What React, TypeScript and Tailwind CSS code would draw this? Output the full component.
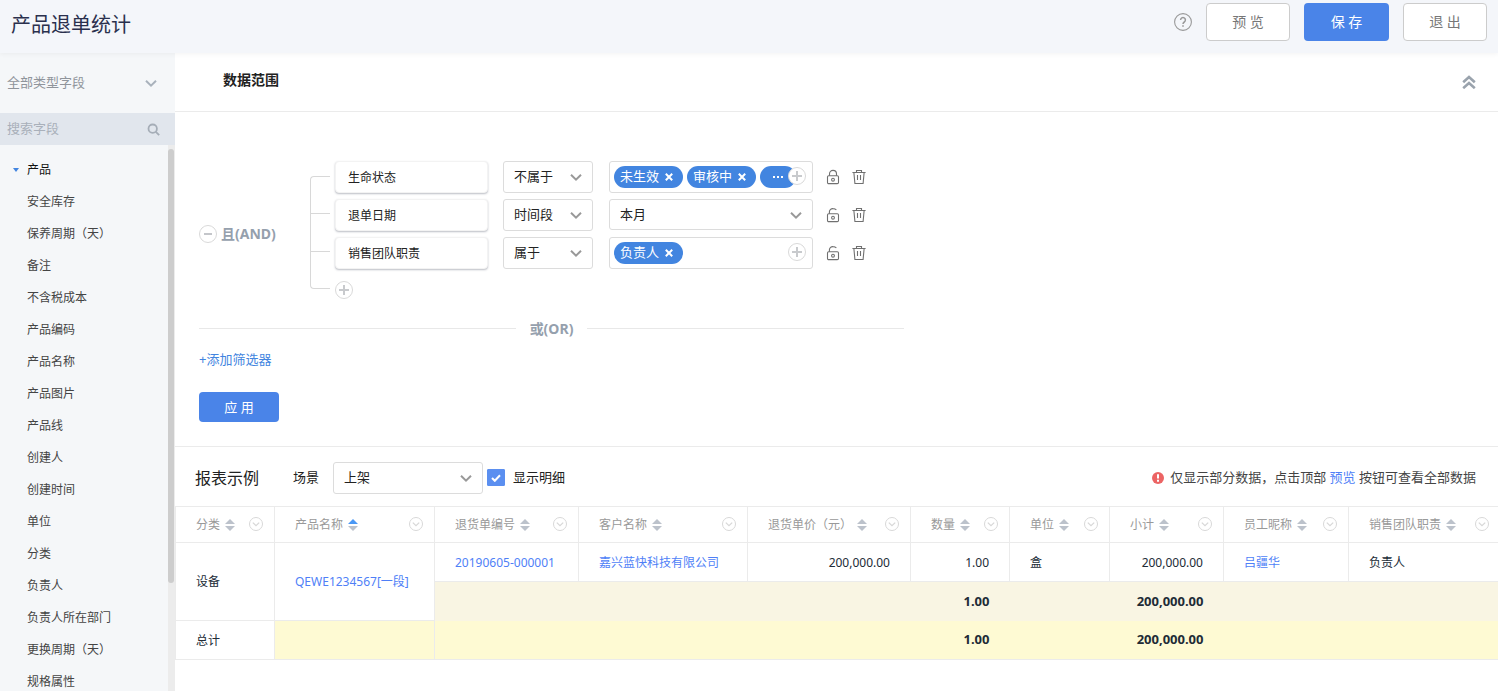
import type { ReactNode } from "react";

const fields = [
  "安全库存",
  "保养周期（天）",
  "备注",
  "不含税成本",
  "产品编码",
  "产品名称",
  "产品图片",
  "产品线",
  "创建人",
  "创建时间",
  "单位",
  "分类",
  "负责人",
  "负责人所在部门",
  "更换周期（天）",
  "规格属性",
];

const columns = [
  { name: "分类", width: "w-[99px]", sorted: false },
  { name: "产品名称", width: "w-[160px]", sorted: true },
  { name: "退货单编号", width: "w-[144px]", sorted: false },
  { name: "客户名称", width: "w-[169px]", sorted: false },
  { name: "退货单价（元）", width: "w-[163px]", sorted: false },
  { name: "数量", width: "w-[99px]", sorted: false },
  { name: "单位", width: "w-[100px]", sorted: false },
  { name: "小计", width: "w-[114px]", sorted: false },
  { name: "员工昵称", width: "w-[125px]", sorted: false },
  { name: "销售团队职责", width: "", sorted: false },
];

function Chevron({ className }: { className: string }) {
  return (
    <svg className={className} width="14" height="14" viewBox="0 0 14 14" fill="none" stroke="currentColor" aria-hidden="true">
      <path d="M2 4.8 L7 9.6 L12 4.8" />
    </svg>
  );
}

function PlusCircle() {
  return (
    <svg width="18" height="18" viewBox="0 0 18 18" fill="#fff" stroke="#d9d9d9" aria-hidden="true">
      <circle cx="9" cy="9" r="8.5" />
      <path d="M9 4v10M4 9h10" stroke="#c8cacd" strokeWidth="2" />
    </svg>
  );
}

function LockIcon({ open }: { open: boolean }) {
  return (
    <svg width="14" height="16" viewBox="0 0 14 16" fill="none" stroke="#707070" strokeWidth="1.1" aria-hidden="true">
      <rect x="1.5" y="6.8" width="11" height="7.8" rx="1.2" />
      {open ? <path d="M3.4 6.8V4.8A3.4 3.4 0 0 1 7 1.6C8.4 1.6 9.6 2 10.4 3" /> : <path d="M3.5 6.8V4.9a3.5 3.5 0 0 1 7 0v1.9" />}
      <circle cx="7" cy="10.7" r="1.4" />
    </svg>
  );
}

function TrashIcon() {
  return (
    <svg width="14" height="16" viewBox="0 0 14 16" fill="none" stroke="#707070" strokeWidth="1.1" aria-hidden="true">
      <path d="M0.4 3.5h13.2M4.5 3.3V1.5h5v1.8M1.9 3.7l1 10.8h8.2l1-10.8M5.5 6v5M8.5 6v5" />
    </svg>
  );
}

function Picker({ label, value, width, tall = true }: { label: string; value: string; width: string; tall?: boolean }) {
  return (
    <div className={`grid shrink-0 items-center ${width}`}>
      <select
        aria-label={label}
        className={`col-start-1 row-start-1 w-full appearance-none rounded-[3px] border border-[#dcdcdc] bg-white pl-2.5 text-[13px] text-[#222] ${tall ? "h-8" : "h-[31px]"}`}
      >
        <option>{value}</option>
      </select>
      <Chevron className="pointer-events-none col-start-1 row-start-1 mr-2.5 justify-self-end stroke-2 text-[#999]" />
    </div>
  );
}

function Tag({ name }: { name: string }) {
  return (
    <span className="flex h-[22px] w-[69px] shrink-0 items-center rounded-full bg-[#4285e0] pl-1.5 text-[13px] text-white">
      {name}
      <button type="button" aria-label={`移除${name}`} className="ml-1.5">
        <svg width="8" height="8" viewBox="0 0 8 8" stroke="#fff" strokeWidth="2" aria-hidden="true">
          <path d="M0.8 0.8l6.4 6.4M7.2 0.8l-6.4 6.4" />
        </svg>
      </button>
    </span>
  );
}

function TagBox({ children }: { children: ReactNode }) {
  return (
    <div className="relative flex h-8 w-[204px] shrink-0 items-center gap-1 rounded-[3px] border border-[#dcdcdc] pl-1">
      {children}
      <button type="button" aria-label="添加值" className="absolute top-[5px] right-1.5">
        <PlusCircle />
      </button>
    </div>
  );
}

function FilterRow({ field, operator, open, children }: { field: string; operator: string; open: boolean; children: ReactNode }) {
  return (
    <div className="flex h-8 items-start">
      <div className="flex h-8 w-[153px] shrink-0 items-center rounded border border-[#f3f3f3] bg-white pt-px pl-3 text-xs text-[#222] shadow-[0_1px_2px_rgba(60,70,90,0.35)]">
        {field}
      </div>
      <div className="mr-4 ml-[15px] flex">
        <Picker label={`${field}条件`} value={operator} width="w-[90px]" />
      </div>
      {children}
      <button type="button" aria-label={open ? "锁定" : "解锁"} className="mt-2 ml-[13px]">
        <LockIcon open={open} />
      </button>
      <button type="button" aria-label="删除" className="mt-2 ml-3">
        <TrashIcon />
      </button>
    </div>
  );
}

function HeaderCell({ name, width, sorted }: { name: string; width: string; sorted: boolean }) {
  return (
    <th scope="col" className={`h-9 border border-[#ebebeb] p-0 font-normal text-[#999] last:border-r-0 ${width}`}>
      <div className="flex items-center pr-[11px] pl-5 whitespace-nowrap in-[th:last-child]:pr-[9px]">
        <span>{name}</span>
        <button type="button" aria-label={`${name}排序`} className="ml-1">
          <svg width="12" height="12" viewBox="0 0 12 12" aria-hidden="true">
            <path d="M6 0l5 5H1z" fill={sorted ? "#4a98f5" : "#bcc2cb"} />
            <path d="M6 12l5-5H1z" fill="#bcc2cb" />
          </svg>
        </button>
        <button type="button" aria-label={`${name}菜单`} className="mb-px ml-auto">
          <svg width="14" height="14" viewBox="0 0 14 14" fill="none" stroke="#d8d8d8" aria-hidden="true">
            <circle cx="7" cy="7" r="6.5" />
            <path d="M3.8 5.6L7 8.6l3.2-3" strokeWidth="1.3" />
          </svg>
        </button>
      </div>
    </th>
  );
}

function Sidebar() {
  return (
    <aside className="flex w-[175px] shrink-0 flex-col bg-[#f5f7f9]">
      <button type="button" className="flex h-[60px] shrink-0 items-center justify-between pr-[17px] pl-[7px] text-[13px] text-[#8f949b]">
        全部类型字段
        <Chevron className="stroke-2 text-[#a9b2bc]" />
      </button>
      <label className="flex h-8 shrink-0 items-center bg-[#e1e6ed] pr-[15px] pl-[7px]">
        <input
          type="text"
          aria-label="搜索字段"
          placeholder="搜索字段"
          className="min-w-0 flex-1 bg-transparent text-[13px] outline-none placeholder:text-[#a9b0ba]"
        />
        <svg width="13" height="13" viewBox="0 0 13 13" fill="none" stroke="#a5adb7" strokeWidth="1.8" aria-hidden="true">
          <circle cx="5.7" cy="5.7" r="4.2" />
          <path d="M8.8 8.8l3.4 3.4" />
        </svg>
      </label>
      <div className="flex min-h-0 flex-1">
        <div className="min-w-0 flex-1 overflow-hidden pt-[9px] text-xs text-[#444]">
          <button type="button" className="flex h-8 items-center pl-[13px] text-[#111]">
            <svg width="6" height="4" viewBox="0 0 6 4" className="mr-2" aria-hidden="true">
              <path d="M0 0h6L3 4z" fill="#4285e0" />
            </svg>
            产品
          </button>
          <ul>
            {fields.map((field) => (
              <li key={field} className="flex h-8 items-center pl-[27px]">
                {field}
              </li>
            ))}
          </ul>
        </div>
        <div className="w-[7px] shrink-0 bg-[#ececec] pt-1">
          <div className="h-[434px] w-1.5 rounded-full bg-[#cdcdcd]" />
        </div>
      </div>
    </aside>
  );
}

function Filters() {
  return (
    <section className="border-b border-[#ebebeb] pt-[49px] pb-6 pl-6">
      <div className="flex">
        <div className="mt-[63px] flex h-5 w-[111px] shrink-0 items-center text-sm font-bold text-[#95a0ad]">
          <button type="button" aria-label="移除条件组" className="mr-1">
            <svg width="18" height="18" viewBox="0 0 18 18" fill="#fff" stroke="#d9d9d9" aria-hidden="true">
              <circle cx="9" cy="9" r="8.5" />
              <path d="M5 9h8" stroke="#c4c6ca" strokeWidth="2" />
            </svg>
          </button>
          且(AND)
        </div>
        <div className="mt-[15px] mr-[5px] flex w-5 shrink-0 flex-col">
          <div className="h-[37px] rounded-tl-sm border-t border-l border-[#d8d8d8]" />
          <div className="h-[38px] border-t border-l border-[#d8d8d8]" />
          <div className="h-[38px] rounded-bl-sm border-y border-l border-[#d8d8d8]" />
        </div>
        <div className="flex flex-col gap-1.5">
          <FilterRow field="生命状态" operator="不属于" open={false}>
            <TagBox>
              <Tag name="未生效" />
              <Tag name="审核中" />
              <span className="flex h-[22px] w-9 items-center justify-center rounded-full bg-[#4285e0]">
                <svg width="10" height="2" viewBox="0 0 10 2" fill="#fff" aria-hidden="true">
                  <path d="M0 0h2v2H0zM4 0h2v2H4zM8 0h2v2H8z" />
                </svg>
              </span>
            </TagBox>
          </FilterRow>
          <FilterRow field="退单日期" operator="时间段" open>
            <Picker label="退单日期值" value="本月" width="w-[204px]" tall={false} />
          </FilterRow>
          <FilterRow field="销售团队职责" operator="属于" open>
            <TagBox>
              <Tag name="负责人" />
            </TagBox>
          </FilterRow>
          <button type="button" aria-label="添加条件" className="mt-1.5 self-start">
            <PlusCircle />
          </button>
        </div>
      </div>
      <div className="mt-5 flex h-5 max-w-[705px] items-center gap-3.5 text-sm font-bold text-[#95a0ad]">
        <div className="mb-px h-px flex-1 bg-[#e8e8e8]" />
        或(OR)
        <div className="mb-px h-px flex-1 bg-[#e8e8e8]" />
      </div>
      <button type="button" className="mt-2.5 block h-5 text-[13px] leading-5 text-[#4285e0]">
        +添加筛选器
      </button>
      <button type="button" className="mt-[23px] block h-[30px] w-20 rounded-sm bg-[#4a84e8] pt-px text-[13px] text-white">
        应 用
      </button>
    </section>
  );
}

function ReportTable() {
  const line = "border border-[#ebebeb]";
  return (
    <table className="w-full table-fixed border-collapse text-left text-xs text-[#212b36]">
      <thead>
        <tr>
          {columns.map((column) => (
            <HeaderCell key={column.name} {...column} />
          ))}
        </tr>
      </thead>
      <tbody>
        <tr className="h-[39px]">
          <td rowSpan={2} className={`${line} px-5`}>设备</td>
          <td rowSpan={2} className={`${line} px-5`}>
            <a href="#product" className="text-[#4f7ff7]">QEWE1234567[一段]</a>
          </td>
          <td className={`${line} px-5 pt-0.5`}>
            <a href="#order" className="text-[#4f7ff7]">20190605-000001</a>
          </td>
          <td className={`${line} px-5 pt-0.5`}>
            <a href="#customer" className="text-[#4f7ff7]">嘉兴蓝快科技有限公司</a>
          </td>
          <td className={`${line} px-5 pt-0.5 text-right`}>200,000.00</td>
          <td className={`${line} px-5 pt-0.5 text-right`}>1.00</td>
          <td className={`${line} px-5 pt-0.5`}>盒</td>
          <td className={`${line} px-5 pt-0.5 text-right`}>200,000.00</td>
          <td className={`${line} px-5 pt-0.5`}>
            <a href="#employee" className="text-[#4f7ff7]">吕疆华</a>
          </td>
          <td className={`${line} border-r-0 px-5 pt-0.5`}>负责人</td>
        </tr>
        <tr className="h-[39px] bg-[#f9f5e3] text-[13px] font-bold">
          <td colSpan={3} />
          <td className="px-5 text-right">1.00</td>
          <td />
          <td className="px-5 text-right">200,000.00</td>
          <td colSpan={2} />
        </tr>
        <tr className="h-[39px] border-b border-[#ebebeb] bg-[#fefad3]">
          <td className={`${line} bg-white px-5 pt-0.5`}>总计</td>
          <td className={line} />
          <td colSpan={3} />
          <td className="px-5 text-right text-[13px] font-bold">1.00</td>
          <td />
          <td className="px-5 text-right text-[13px] font-bold">200,000.00</td>
          <td colSpan={2} />
        </tr>
      </tbody>
    </table>
  );
}

export default function App() {
  return (
    <div className="flex h-screen flex-col overflow-hidden bg-white font-['Noto_Sans','Noto_Sans_CJK_SC',sans-serif] text-[#212b36]">
      <header className="z-10 flex h-[53px] shrink-0 items-start bg-[#f4f6fa] pt-[3px] pr-[11px] pl-[11px] shadow-[0_1px_5px_rgba(0,0,0,0.05)]">
        <h1 className="mr-auto h-11 text-xl leading-11 text-[#2a304d]">产品退单统计</h1>
        <button type="button" aria-label="帮助" className="mt-2.5 mr-3.5">
          <svg width="18" height="18" viewBox="0 0 18 18" fill="none" stroke="#999" aria-hidden="true">
            <circle cx="9" cy="9" r="8.4" strokeWidth="1.1" />
            <path d="M6.6 7a2.4 2.4 0 1 1 3.7 2c-.9.6-1.3 1-1.3 2" strokeWidth="1.5" />
            <path d="M9 12.2v1.6" strokeWidth="1.6" />
          </svg>
        </button>
        <button type="button" className="h-[38px] w-[84px] rounded-sm border border-[#ccc] bg-white text-sm text-[#777]">预 览</button>
        <button type="button" className="ml-3.5 h-[38px] w-[85px] rounded-sm bg-[#4a84e8] text-sm text-white">保 存</button>
        <button type="button" className="ml-3.5 h-[38px] w-[84px] rounded-sm border border-[#ccc] bg-white text-sm text-[#777]">退 出</button>
      </header>
      <div className="flex min-h-0 flex-1">
        <Sidebar />
        <main className="min-w-0 flex-1 overflow-hidden">
          <div className="flex h-[59px] items-center justify-between border-b border-[#ebebeb] pr-[22px] pl-12">
            <h2 className="mb-1 text-sm font-bold text-[#222]">数据范围</h2>
            <button type="button" aria-label="收起">
              <svg width="14" height="14" viewBox="0 0 14 14" fill="none" stroke="#9aa3ad" strokeWidth="2.6" aria-hidden="true">
                <path d="M1.2 7.2L7 2l5.8 5.2M1.2 13.2L7 8l5.8 5.2" />
              </svg>
            </button>
          </div>
          <Filters />
          <section>
            <div className="flex h-[59px] items-center pt-0.5 pr-[22px] pl-5 text-[13px]">
              <h2 className="mr-[34px] text-base text-[#222]">报表示例</h2>
              <span className="mr-3.5 text-[#222]">场景</span>
              <Picker label="场景" value="上架" width="w-[150px]" />
              <label className="ml-1 flex items-center gap-2 text-[#222]">
                <span className="grid items-center justify-items-center">
                  <input
                    type="checkbox"
                    defaultChecked
                    className="peer col-start-1 row-start-1 h-[17px] w-[18px] appearance-none rounded-[1px] border border-[#5b8ff0] checked:bg-[#5b8ff0]"
                  />
                  <svg
                    width="10"
                    height="8"
                    viewBox="0 0 10 8"
                    fill="none"
                    stroke="#fff"
                    strokeWidth="2"
                    className="pointer-events-none invisible col-start-1 row-start-1 peer-checked:visible"
                    aria-hidden="true"
                  >
                    <path d="M1 4l2.8 2.8L9 1.2" />
                  </svg>
                </span>
                显示明细
              </label>
              <p className="ml-auto flex items-center text-[#444]">
                <svg width="12" height="12" viewBox="0 0 12 12" className="mr-1.5" aria-hidden="true">
                  <circle cx="6" cy="6" r="6" fill="#ec6464" />
                  <path d="M5 2.2h2v4.4H5zM5 7.8h2v2H5z" fill="#fff" />
                </svg>
                <span>
                  仅显示部分数据，点击顶部 <a href="#preview" className="text-[#4f7ff7]">预览</a> 按钮可查看全部数据
                </span>
              </p>
            </div>
            <ReportTable />
          </section>
        </main>
      </div>
    </div>
  );
}
